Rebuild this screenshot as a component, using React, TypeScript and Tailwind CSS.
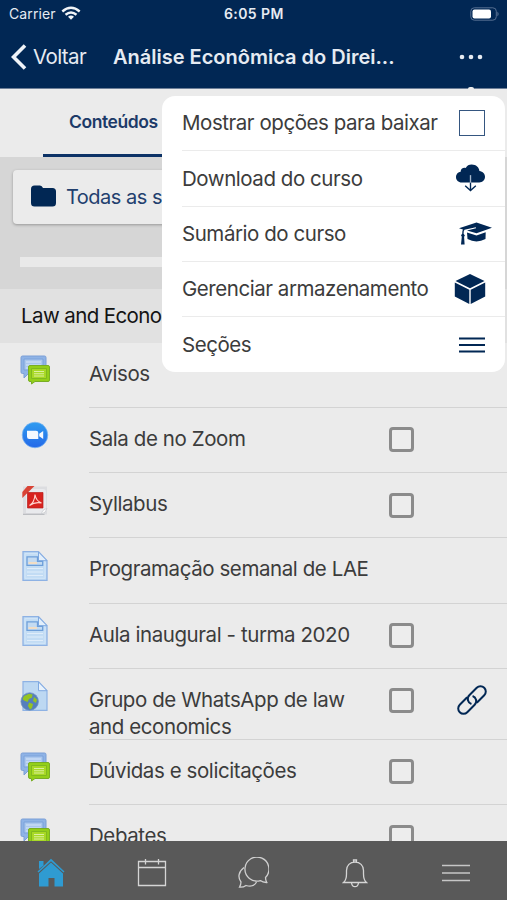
import React from "react";

const NAVY = "#012754";

function ForumIcon() {
  return (
    <svg width="30" height="30" viewBox="0 0 30 30" fill="none">
      <path d="M2.5 1h22q1.500 0 1.500 1.500V17q0 1.500-1.500 1.500H8.500L4 23v-4.500H2.500Q1 18.500 1 17V2.500Q1 1 2.500 1z" fill="#8fb3e6" stroke="#7b9fd6" />
      <path d="M4 4h19v11H4z" fill="#aac7ee" stroke="#7ba2da" />
      <path d="M6 7h15M6 10h15M6 13h4" stroke="#d5e5f8" strokeWidth="1.200" />
      <path d="M10 10.500h18q1.500 0 1.500 1.500v13q0 1.500-1.500 1.500H15L11.500 29v-2.500H10q-1.500 0-1.500-1.500V12q0-1.500 1.500-1.500z" fill="#93cf19" stroke="#78ad25" />
      <path d="M11.500 13.500h15v10h-15z" fill="#a8d926" stroke="#80b91f" />
      <path d="M14 16.500h10M14 18.800h10M14 21h10" stroke="#dcf0a0" strokeWidth="1.100" />
    </svg>
  );
}

function ZoomIcon() {
  return (
    <svg width="30" height="30" viewBox="0 0 30 30">
      <defs>
        <linearGradient id="zoomBlue" x1="0" y1="0" x2="0" y2="1">
          <stop offset="0" stopColor="#2f9cf0" />
          <stop offset="1" stopColor="#2468e8" />
        </linearGradient>
      </defs>
      <circle cx="15" cy="15" r="12.800" fill="url(#zoomBlue)" stroke="#7fb8f0" strokeWidth=".7" />
      <path d="M7 10.800h9q2.300 0 2.300 2.300v6H9.300Q7 19.100 7 16.800zM19.200 13.800l4-2.700v7.800l-4-2.700z" fill="#f5f9ff" />
    </svg>
  );
}

function PdfIcon() {
  return (
    <svg width="30" height="30" viewBox="0 0 30 30" fill="none">
      <path d="M3 .5h24v28H3z" fill="#dcdde0" />
      <path d="M8 3h15q3 0 3 3v17l-4 4H6V8z" fill="#e9eaed" />
      <path d="M3 28.300h21.500" stroke="#b2b4b9" />
      <path d="M21.500 28q.5-4.500 5.500-5.500-1 4.500-5.500 5.500z" fill="#fafafa" stroke="#c3c5ca" strokeWidth=".7" />
      <path d="M7.500 0h7L2.300 12V6z" fill="#d94335" />
      <path d="M7.500 6.500H23V22H7.500z" fill="#d8231f" stroke="#b91f1d" strokeWidth=".7" />
      <path d="M9.500 19.500q5-3 5.500-11 1 6.500 6.500 8.500-6.500-1.500-12 2.500z" stroke="#ffd6d0" strokeWidth="1.100" />
    </svg>
  );
}

function PageIcon() {
  return (
    <svg width="30" height="30" viewBox="0 0 30 30" fill="none">
      <path d="M3 .7h15.500l8.500 9v19.600H3z" fill="#c2dcf4" stroke="#8eb2e4" strokeWidth="1.300" />
      <path d="M5 2.700h12.500l7.500 8.300v16.300H5z" stroke="#d3e6f8" />
      <path d="M18.500 1v8.700H27z" fill="#e3effb" stroke="#7fa9e1" />
      <path d="M7 5.800h10.500v4.500h5.200v4H7z" fill="#c4dbf2" stroke="#6e9fd9" strokeWidth="1.300" />
      <path d="M8.500 12h8.500" stroke="#f2ddc4" strokeWidth="2" />
      <path d="M7 17.500h16M7 21h16M7 24.500h16" stroke="#e0edfa" strokeWidth="1.200" />
    </svg>
  );
}

function UrlIcon() {
  return (
    <svg width="30" height="30" viewBox="0 0 30 30" fill="none">
      <path d="M3 .7h15.500l8.500 9v19.600H3z" fill="#bdd8f2" stroke="#8eb2e4" strokeWidth="1.200" />
      <path d="M18.500 1v8.700H27z" fill="#e8f2fc" stroke="#7fa9e1" />
      <circle cx="9.700" cy="20.500" r="8.800" fill="#557fbd" stroke="#7393bf" strokeWidth=".7" />
      <path d="M4 15l5-2.300 3.500.8-.5 3-3 1.500L7.500 21 4 19.500 2.500 18zM14 16l3 2.500-1 3.500-3-2zM9 21.500l4 1.500-1 4-2 1.500-2-3.500z" fill="#94c322" />
    </svg>
  );
}

function LinkIcon() {
  return (
    <svg width="30" height="30" viewBox="0 0 30 30" fill="none" stroke={NAVY} strokeWidth="2">
      <g transform="rotate(-45 15 15)">
        <path d="M16.500 20.300H27a5.300 5.300 0 0 0 0-10.600H16.500a5.300 5.300 0 0 0-4.700 7.700" />
        <path d="M13.500 9.700H3a5.300 5.300 0 0 0 0 10.600h10.500a5.300 5.300 0 0 0 4.700-7.700" />
      </g>
    </svg>
  );
}

function CloudIcon() {
  return (
    <svg width="31" height="29" viewBox="0 0 32 30" fill="none">
      <path d="M7 19.200c-3.600 0-6-2.500-6-5.700 0-3.300 2.400-5.300 4.800-5.600 0-2.800 2.700-4.500 5.300-3.700C12.200 1.800 14.500.6 17.200.6c4.600 0 7.700 3 8 6.600 3.600.5 5.800 3 5.800 6.100 0 3.400-2.500 5.900-6 5.900z" fill={NAVY} />
      <path d="M16 11.500v8" stroke="#a7b8cd" strokeWidth="1.400" />
      <path d="M16 19.500v8M10.500 22.500l5.500 5 5.500-5" stroke={NAVY} strokeWidth="1.400" />
    </svg>
  );
}

function CapIcon() {
  return (
    <svg width="33" height="24" viewBox="0 0 33 24">
      <path d="M0 6.300L17.500.5 33 5.800 17.500 11.300 8 8.500l9-2.200-.2-1-11.300 2.500q-1 1-.9 4l1.300 1.700-.8 1.200.5 7.800H2l.8-7.800-.8-1.400 1.200-1.600q0-3 .7-4.200z" fill={NAVY} />
      <path d="M8 10.500l9.500 3 9.200-3.200-.2 6.700q-9 4.800-18 0z" fill={NAVY} />
    </svg>
  );
}

function CubeIcon() {
  return (
    <svg width="32" height="30" viewBox="0 0 32 30">
      <path d="M16 0l14.500 7L16 14.200 1.500 7z" fill={NAVY} />
      <path d="M.8 8.500l14.500 7.200V30L.8 22.500zM31.200 8.500l-14.500 7.200V30l14.500-7.500z" fill={NAVY} />
    </svg>
  );
}

function Lines() {
  return (
    <svg width="26" height="16" viewBox="0 0 26 16" stroke={NAVY} strokeWidth="2">
      <path d="M0 1.500h26M0 8h26M0 14.500h26" />
    </svg>
  );
}

const menu = [
  { label: "Mostrar opções para baixar", icon: <span className="mr-[20px] block h-[26px] w-[26px] border border-[#355680]" /> },
  { label: "Download do curso", icon: <span className="mr-[19px]"><CloudIcon /></span> },
  { label: "Sumário do curso", icon: <span className="mr-[13px]"><CapIcon /></span> },
  { label: "Gerenciar armazenamento", icon: <span className="mr-[19px]"><CubeIcon /></span> },
  { label: "Seções", icon: <span className="mr-[20px]"><Lines /></span> },
];

const rows = [
  { label: "Avisos", icon: <ForumIcon />, check: false },
  { label: "Sala de no Zoom", icon: <ZoomIcon />, check: true },
  { label: "Syllabus", icon: <PdfIcon />, check: true },
  { label: "Programação semanal de LAE", icon: <PageIcon />, check: false },
  { label: "Aula inaugural - turma 2020", icon: <PageIcon />, check: true },
  { label: "Grupo de WhatsApp de law and economics", icon: <UrlIcon />, check: true, link: true },
  { label: "Dúvidas e solicitações", icon: <ForumIcon />, check: true },
  { label: "Debates", icon: <ForumIcon />, check: true },
];

export default function App() {
  return (
    <div className="relative flex h-[900px] w-[507px] flex-col overflow-hidden bg-[#ebebeb] font-['Inter','Liberation_Sans',sans-serif] text-[#3c3c3c]">
      <header className="relative h-[89px] shrink-0 border-b border-[#6d7f98] bg-[#012754] text-[#e6ebf2]">
        <div className="flex h-7 items-center pl-[9px] pr-[7px]">
          <span className="w-[49px] whitespace-nowrap pb-[1px] text-[14px] tracking-[0.1px]">Carrier</span>
          <svg className="mb-[2px] ml-[3px]" width="20" height="15" viewBox="0 0 20 15" fill="none" stroke="#f1f4f8" strokeWidth="2.400">
            <path d="M1.300 5.500q8.700-7.400 17.400 0M4.500 8.700q5.500-4.500 11 0" />
            <path d="M10 13.700l-3-3q3-2.300 6 0z" fill="#f1f4f8" stroke="none" />
          </svg>
          <span className="ml-[143px] whitespace-nowrap pb-[1px] text-[14px] font-semibold tracking-[0.4px]">6:05 PM</span>
          <svg className="mb-[1px] ml-auto" width="30" height="14" viewBox="0 0 30 14" fill="none">
            <rect x=".8" y=".8" width="25.500" height="12.400" rx="3.500" stroke="#566f92" />
            <rect x="2.500" y="2.500" width="18.500" height="9" rx="2" fill="#fff" />
            <path d="M27.500 4.500q2 2.500 0 5z" fill="#6d83a2" />
          </svg>
        </div>
        <div className="flex h-[60px] items-center pb-[3px] pl-[11px]">
          <svg width="16" height="26" viewBox="0 0 16 26" fill="none" stroke="#eff3f8" strokeWidth="3.600">
            <path d="M14 1.500L2.500 13 14 24.500" />
          </svg>
          <span className="ml-[6px] w-[80px] whitespace-nowrap pt-[2px] text-[20.500px] tracking-[-0.600px]">Voltar</span>
          <span className="w-[300px] whitespace-nowrap text-[20px] font-semibold">Análise Econômica do Direi...</span>
          <svg className="ml-[46px]" width="24" height="6" viewBox="0 0 24 6" fill="#e6ebf2">
            <circle cx="3" cy="3" r="2.300" /><circle cx="12" cy="3" r="2.300" /><circle cx="21" cy="3" r="2.300" />
          </svg>
        </div>
        <div className="absolute left-[468px] top-[87px] h-[2px] w-[6px] rounded-t-full bg-[#ebebeb]" />
      </header>

      <div className="flex h-[68px] shrink-0">
        <div className="ml-[43px] flex w-[210px] items-center border-b-[3px] border-[#0c3266] pl-[26px] pt-[2px] text-[17.500px] font-semibold tracking-[-0.420px] text-[#1c3a68]">
          Conteúdos
        </div>
      </div>

      <div className="h-[132px] shrink-0 bg-[#d6d6d6] px-[13px] pt-[13px]">
        <div className="flex h-[54px] items-center rounded-[4px] bg-[#ebebeb] pl-[18px] shadow-[0_1px_3px_rgba(0,0,0,0.3)]">
          <svg className="mb-[3px]" width="25" height="22" viewBox="0 0 25 22" fill={NAVY}>
            <path d="M0 4Q0 .5 3.500.5H9Q11 .5 12 3h9.500Q25 3 25 6.500v11.500q0 3.500-3.500 3.500h-18Q0 21.500 0 18z" />
          </svg>
          <span className="ml-[10px] text-[20px] tracking-[-0.500px] text-[#22406e]">Todas as seções</span>
        </div>
        <div className="ml-[7px] mt-[33px] h-[10px] bg-[#e9e9e9]" />
      </div>

      <div className="flex h-[53.500px] shrink-0 items-center bg-[#e1e1e1] pl-[21px] pt-[1px] text-[20.500px] tracking-[-0.600px] text-[#141414]">Law and Economics</div>

      <main className="flex-1 overflow-hidden">
        {rows.map((r) => (
          <div key={r.label} className={`flex ${r.link ? "h-[71px]" : "h-[65.250px]"} pl-5`}>
            <div className="w-[69px] pt-[12.500px]">{r.icon}</div>
            <div className="flex flex-1 border-b border-[#d3d3d3]">
              <div className="w-[300px] pt-[17px] text-[20.500px] leading-[27px] tracking-[-0.420px]">
                <p className={r.link ? "w-[265px]" : "whitespace-nowrap"}>{r.label}</p>
              </div>
              <div className="pt-[19.500px]">
                {r.check && <span className="block h-[25px] w-[25px] rounded-[4px] border-[3px] border-[#8b8b8b] bg-[#ededed]" />}
              </div>
              {r.link && <div className="ml-[43px] pt-[16.500px]"><LinkIcon /></div>}
            </div>
          </div>
        ))}
      </main>

      <nav className="h-[59px] shrink-0 bg-[#595959]">
        <div className="grid h-full grid-cols-5 items-center justify-items-center pt-[4px]">
          <svg width="28" height="30" viewBox="0 0 28 30" fill="#2f9bd2">
            <path d="M2 11V3h4.500v4.500zM14 .8L27.500 13.500l-1 1L14 3.200 1.500 14.500l-1-1z" />
            <path d="M14 4.600L26 15.500v13h-8.500V20h-6v8.500H2v-13z" />
          </svg>
          <svg width="30" height="30" viewBox="0 0 30 30" fill="none" stroke="#d5d5d5" strokeWidth="1.300">
            <path d="M1.500 3.500h27v24h-27zM1.500 9.500h27M8.500 1v5.500M21.500 1v5.500" />
          </svg>
          <svg width="32" height="32" viewBox="0 0 32 32" fill="none" stroke="#d0d0d0" strokeWidth="1.300">
            <path d="M29.800 25.500c-3 .1-5-.7-6.500-1.900A12 12 0 1 1 28.500 20.500c0 2 .4 3.500 1.300 5z" />
            <path d="M7 10.500C1.500 14.500.5 20.500 4 25q0 2.500-1.500 5.200 4 .2 6.500-1.700c5 1.500 8.500.5 10.500-3.500" />
          </svg>
          <svg width="26" height="30" viewBox="0 0 26 30" fill="none" stroke="#d5d5d5" strokeWidth="1.300">
            <path d="M1.500 24.500h23q-3-2.500-3-8.500v-3.500c0-5-3.500-8.500-8.500-8.500s-8.500 3.500-8.500 8.500V16q0 6-3 8.500zM11.500 4V2h3v2M9.500 25q.5 3.700 3.500 3.700t3.500-3.700" />
          </svg>
          <svg width="28" height="18" viewBox="0 0 28 18" stroke="#c6c6c6" strokeWidth="1.500">
            <path d="M0 1.500h28M0 9h28M0 16.500h28" />
          </svg>
        </div>
      </nav>

      <div className="absolute left-[162px] top-[96px] h-[276px] w-[343px] rounded-[13px] bg-white pl-5">
        {menu.map((m, i) => (
          <div key={m.label} className={`flex h-[55.300px] items-center justify-between ${i < 4 ? "border-b border-[#ebebeb]" : ""}`}>
            <span className="whitespace-nowrap pt-[1px] text-[20.500px] tracking-[-0.450px]">{m.label}</span>
            {m.icon}
          </div>
        ))}
      </div>
    </div>
  );
}
